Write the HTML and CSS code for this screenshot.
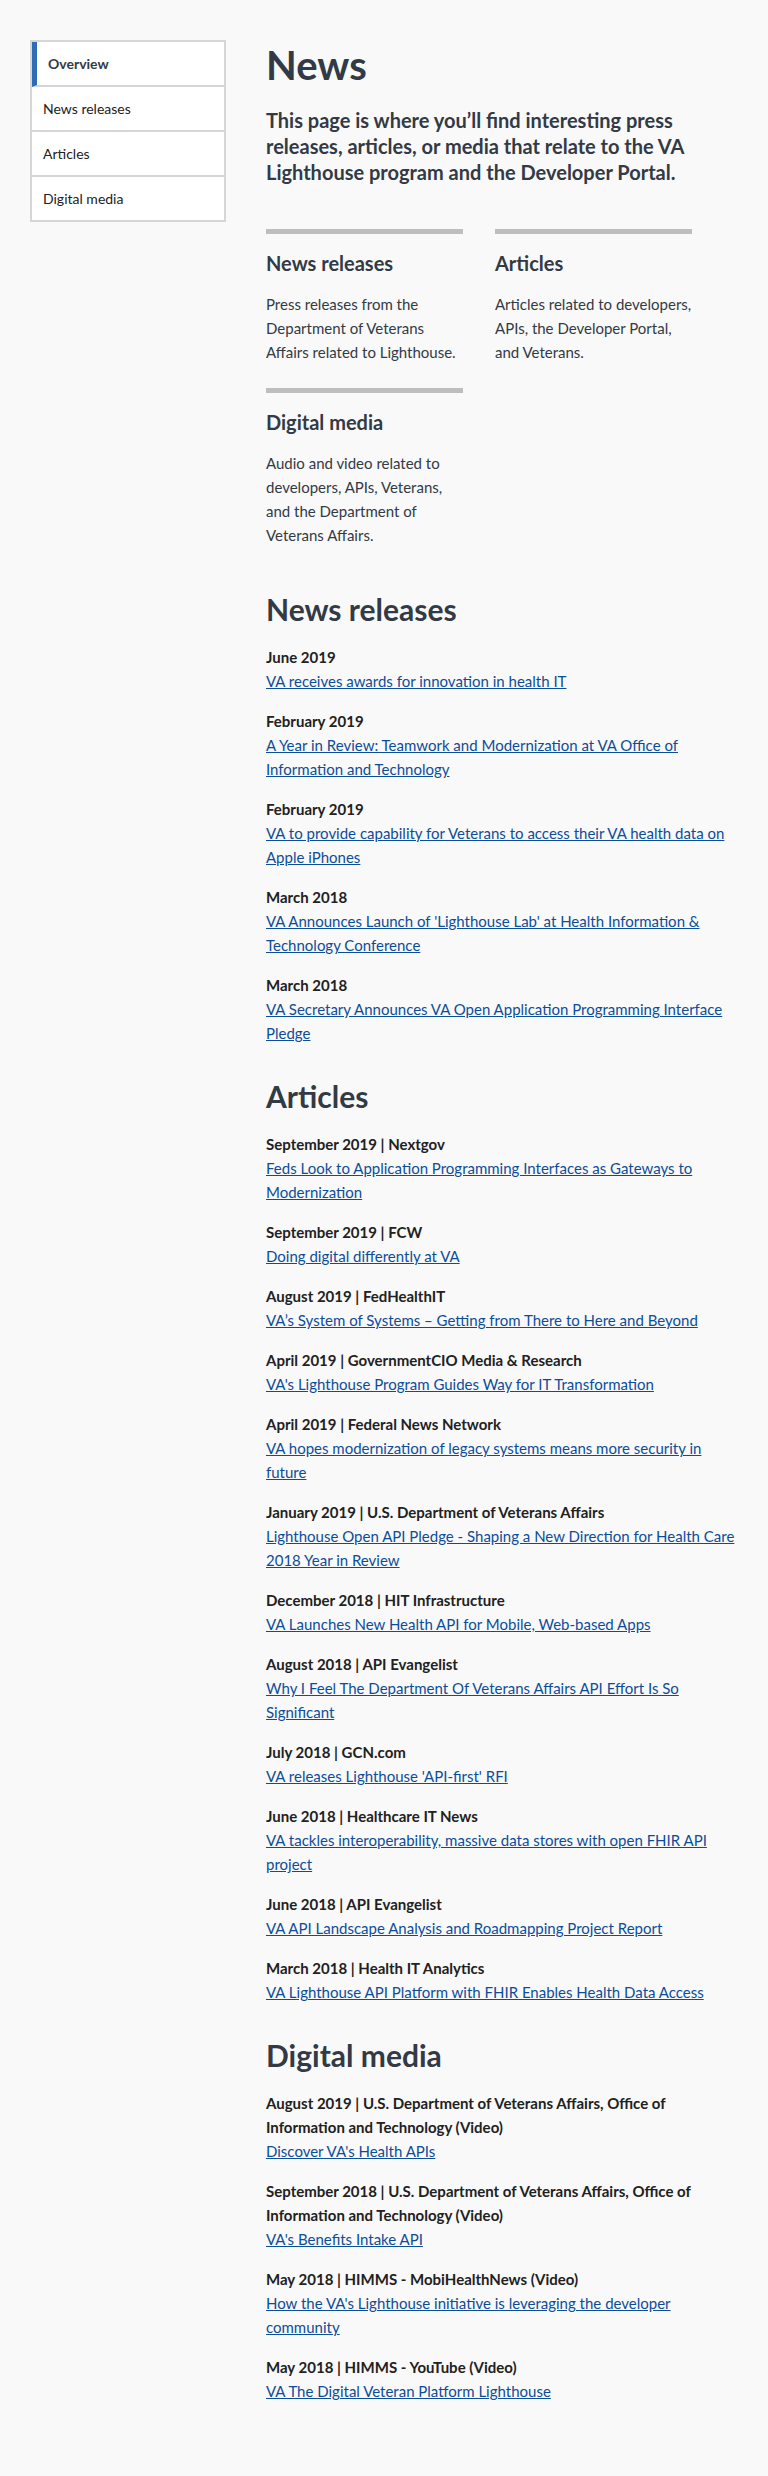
FILE: index.html
```html
<!DOCTYPE html>
<html lang="en">
<head>
<meta charset="utf-8">
<title>News</title>
<link rel="stylesheet" href="styles.css">
</head>
<body>
<div class="page">
  <nav class="sidenav">
    <a class="sidenav-item active" href="#">Overview</a>
    <a class="sidenav-item" href="#news-releases">News releases</a>
    <a class="sidenav-item" href="#articles">Articles</a>
    <a class="sidenav-item" href="#digital-media">Digital media</a>
  </nav>
  <main class="content">
    <h1 class="page-title">News</h1>
    <p class="intro">This page is where you’ll find interesting press releases, articles, or media that relate to the VA Lighthouse program and the Developer Portal.</p>

    <div class="cards">
      <div class="card">
        <h3 class="card-title">News releases</h3>
        <p class="card-text">Press releases from the Department of Veterans Affairs related to Lighthouse.</p>
      </div>
      <div class="card">
        <h3 class="card-title">Articles</h3>
        <p class="card-text">Articles related to developers, APIs, the Developer Portal, and Veterans.</p>
      </div>
      <div class="card">
        <h3 class="card-title">Digital media</h3>
        <p class="card-text">Audio and video related to developers, APIs, Veterans, and the Department of Veterans Affairs.</p>
      </div>
    </div>

    <section class="news-section" id="news-releases">
      <h2 class="section-title">News releases</h2>
      <ul class="items">
        <li class="item"><div class="item-date">June 2019</div><a class="item-link" href="#">VA receives awards for innovation in health IT</a></li>
        <li class="item"><div class="item-date">February 2019</div><a class="item-link" href="#">A Year in Review: Teamwork and Modernization at VA Office of Information and Technology</a></li>
        <li class="item"><div class="item-date">February 2019</div><a class="item-link" href="#">VA to provide capability for Veterans to access their VA health data on Apple iPhones</a></li>
        <li class="item"><div class="item-date">March 2018</div><a class="item-link" href="#">VA Announces Launch of 'Lighthouse Lab' at Health Information &amp; Technology Conference</a></li>
        <li class="item"><div class="item-date">March 2018</div><a class="item-link" href="#">VA Secretary Announces VA Open Application Programming Interface Pledge</a></li>
      </ul>
    </section>

    <section class="news-section" id="articles">
      <h2 class="section-title">Articles</h2>
      <ul class="items">
        <li class="item"><div class="item-date">September 2019 | Nextgov</div><a class="item-link" href="#">Feds Look to Application Programming Interfaces as Gateways to Modernization</a></li>
        <li class="item"><div class="item-date">September 2019 | FCW</div><a class="item-link" href="#">Doing digital differently at VA</a></li>
        <li class="item"><div class="item-date">August 2019 | FedHealthIT</div><a class="item-link" href="#">VA’s System of Systems – Getting from There to Here and Beyond</a></li>
        <li class="item"><div class="item-date">April 2019 | GovernmentCIO Media &amp; Research</div><a class="item-link" href="#">VA's Lighthouse Program Guides Way for IT Transformation</a></li>
        <li class="item"><div class="item-date">April 2019 | Federal News Network</div><a class="item-link" href="#">VA hopes modernization of legacy systems means more security in future</a></li>
        <li class="item"><div class="item-date">January 2019 | U.S. Department of Veterans Affairs</div><a class="item-link" href="#">Lighthouse Open API Pledge - Shaping a New Direction for Health Care 2018 Year in Review</a></li>
        <li class="item"><div class="item-date">December 2018 | HIT Infrastructure</div><a class="item-link" href="#">VA Launches New Health API for Mobile, Web-based Apps</a></li>
        <li class="item"><div class="item-date">August 2018 | API Evangelist</div><a class="item-link" href="#">Why I Feel The Department Of Veterans Affairs API Effort Is So Significant</a></li>
        <li class="item"><div class="item-date">July 2018 | GCN.com</div><a class="item-link" href="#">VA releases Lighthouse 'API-first' RFI</a></li>
        <li class="item"><div class="item-date">June 2018 | Healthcare IT News</div><a class="item-link" href="#">VA tackles interoperability, massive data stores with open FHIR API project</a></li>
        <li class="item"><div class="item-date">June 2018 | API Evangelist</div><a class="item-link" href="#">VA API Landscape Analysis and Roadmapping Project Report</a></li>
        <li class="item"><div class="item-date">March 2018 | Health IT Analytics</div><a class="item-link" href="#">VA Lighthouse API Platform with FHIR Enables Health Data Access</a></li>
      </ul>
    </section>

    <section class="news-section" id="digital-media">
      <h2 class="section-title">Digital media</h2>
      <ul class="items">
        <li class="item"><div class="item-date">August 2019 | U.S. Department of Veterans Affairs, Office of Information and Technology (Video)</div><a class="item-link" href="#">Discover VA's Health APIs</a></li>
        <li class="item"><div class="item-date">September 2018 | U.S. Department of Veterans Affairs, Office of Information and Technology (Video)</div><a class="item-link" href="#">VA's Benefits Intake API</a></li>
        <li class="item"><div class="item-date">May 2018 | HIMMS - MobiHealthNews (Video)</div><a class="item-link" href="#">How the VA's Lighthouse initiative is leveraging the developer community</a></li>
        <li class="item"><div class="item-date">May 2018 | HIMMS - YouTube (Video)</div><a class="item-link" href="#">VA The Digital Veteran Platform Lighthouse</a></li>
      </ul>
    </section>
  </main>
</div>
</body>
</html>
```

FILE: styles.css
```css
html {
  background: #f9f9f9;
}

body {
  margin: 0;
  font-family: Lato, "Liberation Sans", sans-serif;
  color: #212121;
  background: #f9f9f9;
}

.page {
  display: flex;
  align-items: flex-start;
  gap: 40px;
  padding: 40px 30px 60px 30px;
}

/* Side navigation */
.sidenav {
  flex: none;
  width: 192px;
  border: 2px solid #d6d6d6;
  background: #ffffff;
  display: flex;
  flex-direction: column;
}

.sidenav-item {
  display: flex;
  align-items: center;
  height: 43px;
  padding-left: 11px;
  border-bottom: 2px solid #d6d6d6;
  font-size: 14px;
  color: #212121;
  text-decoration: none;
}

.sidenav-item:last-child {
  border-bottom: none;
}

.sidenav-item.active {
  border-left: 5px solid #2d6db5;
  font-weight: 700;
  color: #323a45;
}

/* Main content */
.content {
  flex: none;
  width: 472px;
  padding-top: 1px;
}

.page-title {
  margin: 0;
  font-size: 40px;
  line-height: 48px;
  font-weight: 700;
  color: #323a45;
}

.intro {
  margin: 18px 0 0 0;
  font-size: 20px;
  line-height: 26px;
  font-weight: 700;
  color: #323a45;
}

.cards {
  display: grid;
  grid-template-columns: 197px 197px;
  column-gap: 32px;
  row-gap: 24px;
  margin-top: 44px;
  margin-bottom: 44px;
}

.card {
  border-top: 5px solid #bebebe;
  padding-top: 17px;
}

.card-title {
  margin: 0;
  font-size: 20px;
  line-height: 24px;
  font-weight: 700;
  color: #323a45;
}

.card-text {
  margin: 17px 0 0 0;
  font-size: 15px;
  line-height: 24px;
  color: #323a45;
}

.news-section + .news-section {
  margin-top: 33px;
}

.section-title {
  margin: 0 0 18px 0;
  font-size: 30px;
  line-height: 36px;
  font-weight: 700;
  color: #323a45;
}

.items {
  list-style: none;
  margin: 0;
  padding: 0;
  display: flex;
  flex-direction: column;
  gap: 16px;
}

.item {
  font-size: 15px;
  line-height: 24px;
}

.item-date {
  font-weight: 700;
  color: #212121;
}

.item-link {
  color: #0c4d99;
  text-decoration: underline;
}
```
